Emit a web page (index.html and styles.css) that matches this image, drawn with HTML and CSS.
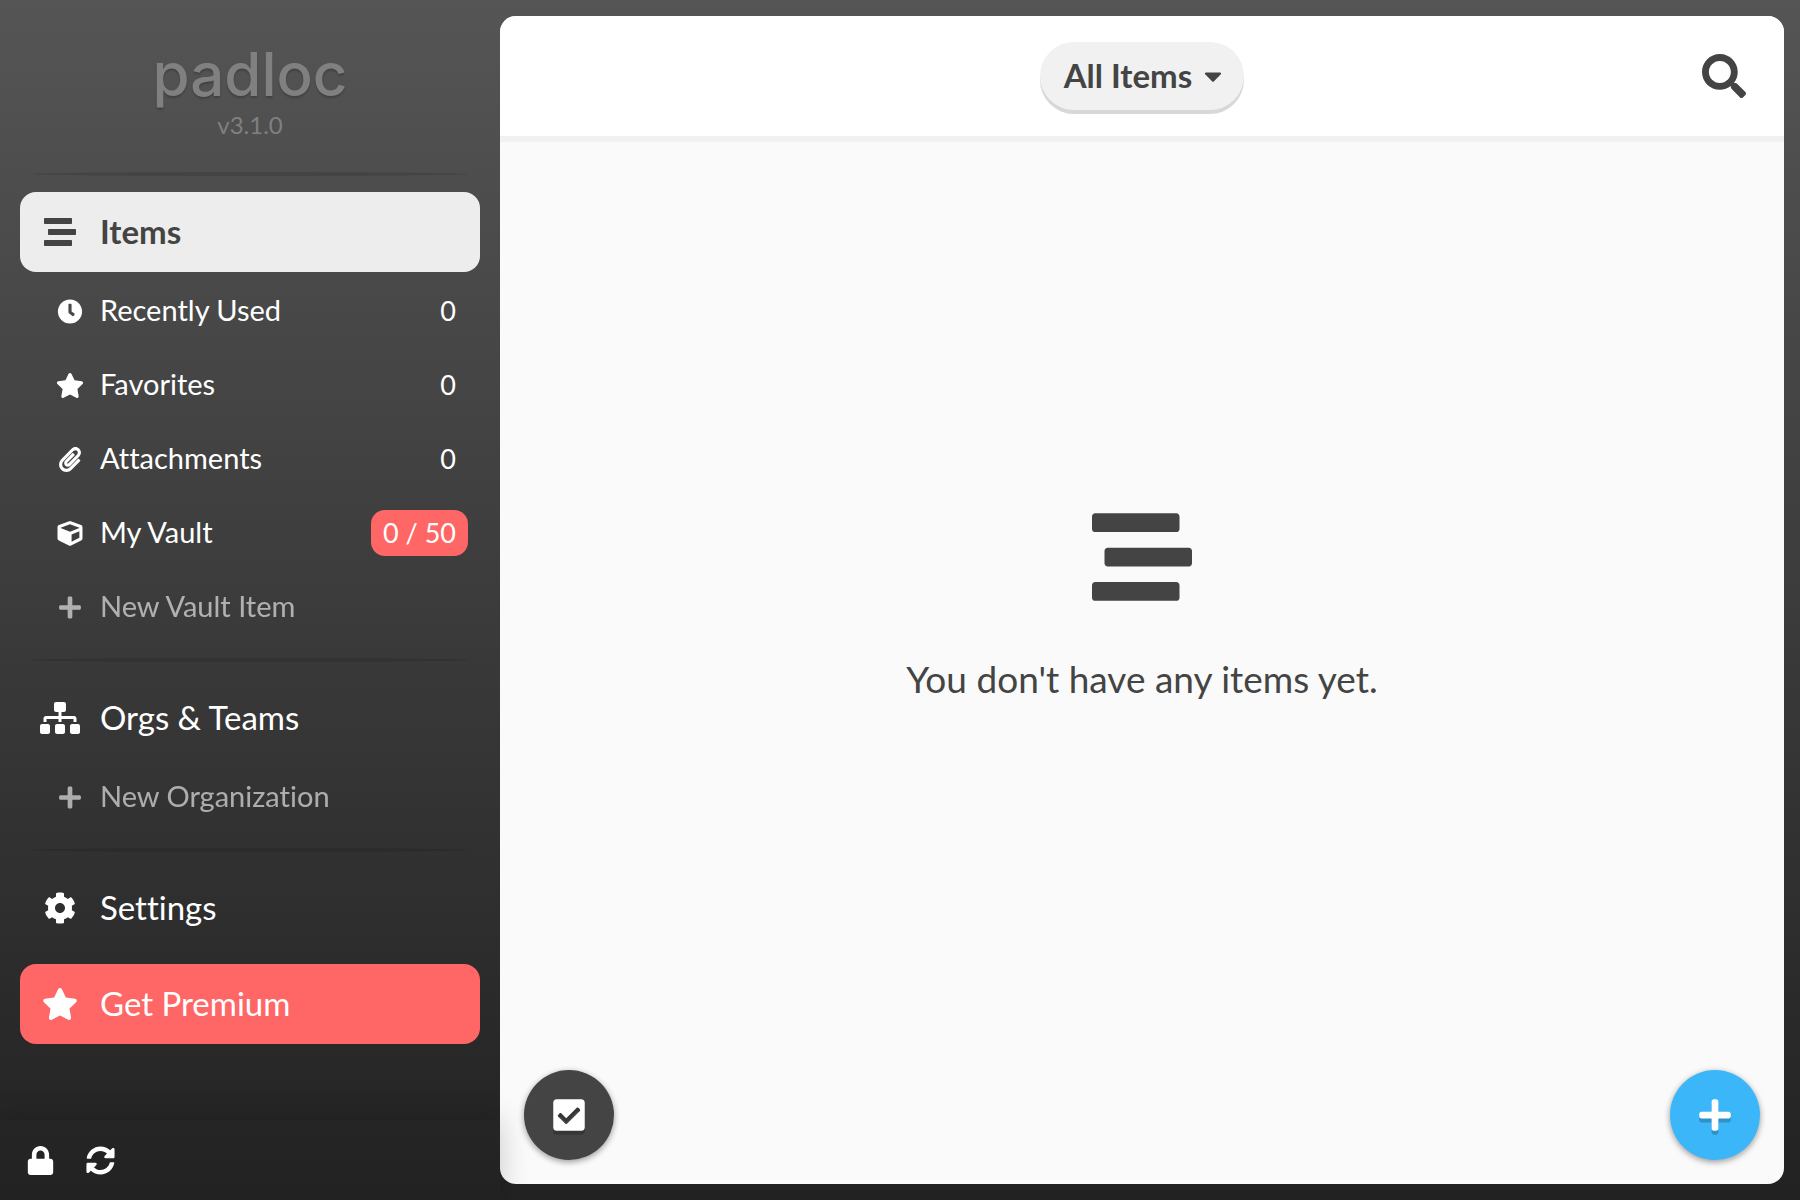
FILE: index.html
```html
<!DOCTYPE html>
<html lang="en">
<head>
<meta charset="utf-8">
<meta name="viewport" content="width=device-width, initial-scale=1">
<title>Padloc</title>
<link rel="stylesheet" href="styles.css">
</head>
<body>
<svg class="sprite" aria-hidden="true">
  <symbol id="stream" viewBox="0 0 512 512"><path d="M16 128h416c8.84 0 16-7.16 16-16V48c0-8.84-7.16-16-16-16H16C7.16 32 0 39.16 0 48v64c0 8.84 7.16 16 16 16zm480 80H80c-8.84 0-16 7.16-16 16v64c0 8.84 7.16 16 16 16h416c8.84 0 16-7.16 16-16v-64c0-8.84-7.16-16-16-16zm-64 176H16c-8.84 0-16 7.16-16 16v64c0 8.84 7.16 16 16 16h416c8.84 0 16-7.16 16-16v-64c0-8.84-7.16-16-16-16z"/></symbol>
  <symbol id="clock" viewBox="0 0 512 512"><path d="M256 8C119 8 8 119 8 256s111 248 248 248 248-111 248-248S393 8 256 8zm92.49 313l-20 25a16 16 0 0 1-22.49 2.5l-67-49.72a40 40 0 0 1-15-31.23V112a16 16 0 0 1 16-16h32a16 16 0 0 1 16 16v144l58 42.5a16 16 0 0 1 2.49 22.5z"/></symbol>
  <symbol id="star" viewBox="0 0 576 512"><path d="M259.3 17.8L194 150.2 47.9 171.5c-26.2 3.8-36.7 36.1-17.7 54.6l105.7 103-25 145.5c-4.5 26.3 23.2 46 46.4 33.7L288 439.6l130.7 68.7c23.2 12.2 50.9-7.4 46.4-33.7l-25-145.5 105.7-103c19-18.5 8.5-50.8-17.7-54.6L382 150.2 316.7 17.8c-11.7-23.6-45.6-23.9-57.4 0z"/></symbol>
  <symbol id="paperclip" viewBox="0 0 448 512"><path d="M43.246 466.142c-58.43-60.289-57.341-157.511 1.386-217.581L254.392 34c44.316-45.332 116.351-45.336 160.671 0 43.89 44.894 43.943 117.329 0 162.276L232.214 383.128c-29.855 30.537-78.633 30.111-107.982-.998-28.275-29.97-27.368-77.473 1.452-106.953l143.743-146.835c6.182-6.314 16.312-6.422 22.626-.241l22.861 22.379c6.315 6.182 6.422 16.312.241 22.626L171.427 319.927c-4.932 5.045-5.236 13.428-.648 18.292 4.372 4.634 11.245 4.711 15.688.165l182.849-186.851c19.613-20.062 19.613-52.725-.011-72.798-19.189-19.627-49.957-19.637-69.154 0L90.39 293.295c-34.763 35.56-35.299 93.12-1.191 128.313 34.01 35.093 88.985 35.137 123.058.286l172.06-175.999c6.177-6.319 16.307-6.433 22.626-.256l22.877 22.364c6.319 6.177 6.434 16.307.256 22.626l-172.06 175.998c-59.576 60.938-155.943 60.216-214.77-.485z"/></symbol>
  <symbol id="cube" viewBox="0 0 512 512"><path d="M239.1 6.3l-208 78c-18.7 7-31.1 25-31.1 45v225.1c0 18.2 10.3 34.8 26.5 42.9l208 104c13.5 6.8 29.4 6.8 42.9 0l208-104c16.3-8.1 26.5-24.8 26.5-42.9V129.3c0-20-12.4-37.9-31.1-44.9l-208-78C262 2.2 250 2.2 239.1 6.3zM256 68.4l192 72v1.1l-192 78-192-78v-1.1l192-72zm32 356V275.5l160-65v133.9l-160 80z"/></symbol>
  <symbol id="plus" viewBox="0 0 448 512"><path d="M416 208H272V64c0-17.67-14.33-32-32-32h-32c-17.67 0-32 14.33-32 32v144H32c-17.67 0-32 14.33-32 32v32c0 17.67 14.33 32 32 32h144v144c0 17.67 14.33 32 32 32h32c17.67 0 32-14.33 32-32V304h144c17.67 0 32-14.33 32-32v-32c0-17.67-14.33-32-32-32z"/></symbol>
  <symbol id="sitemap" viewBox="0 0 640 512"><path d="M128 352H32c-17.67 0-32 14.33-32 32v96c0 17.67 14.33 32 32 32h96c17.67 0 32-14.33 32-32v-96c0-17.67-14.33-32-32-32zm-24-80h192v48h48v-48h192v48h48v-57.59c0-21.17-17.23-38.41-38.41-38.41H344v-64h40c17.67 0 32-14.33 32-32V32c0-17.67-14.33-32-32-32H256c-17.67 0-32 14.33-32 32v96c0 17.67 14.33 32 32 32h40v64H94.41C73.23 224 56 241.23 56 262.41V320h48v-48zm264 80h-96c-17.67 0-32 14.33-32 32v96c0 17.67 14.33 32 32 32h96c17.67 0 32-14.33 32-32v-96c0-17.67-14.33-32-32-32zm240 0h-96c-17.67 0-32 14.33-32 32v96c0 17.67 14.33 32 32 32h96c17.67 0 32-14.33 32-32v-96c0-17.67-14.33-32-32-32z"/></symbol>
  <symbol id="cog" viewBox="0 0 512 512"><path d="M487.4 315.7l-42.6-24.6c4.3-23.2 4.3-47 0-70.2l42.6-24.6c4.9-2.8 7.1-8.6 5.5-14-11.1-35.6-30-67.8-54.7-94.6-3.8-4.1-10-5.1-14.8-2.3L380.8 110c-17.9-15.4-38.5-27.3-60.8-35.1V25.800c0-5.600-3.900-10.500-9.400-11.700-36.700-8.200-74.300-7.800-109.200 0-5.500 1.200-9.400 6.100-9.400 11.700V75c-22.200 7.900-42.800 19.800-60.800 35.100L88.700 85.500c-4.900-2.800-11-1.900-14.800 2.300-24.700 26.700-43.600 58.900-54.700 94.600-1.700 5.400.6 11.200 5.500 14L67.300 221c-4.300 23.200-4.300 47 0 70.200l-42.6 24.600c-4.900 2.800-7.100 8.600-5.500 14 11.100 35.600 30 67.800 54.700 94.600 3.800 4.100 10 5.100 14.800 2.300l42.600-24.600c17.900 15.400 38.500 27.300 60.800 35.100v49.200c0 5.600 3.900 10.500 9.400 11.700 36.700 8.200 74.300 7.800 109.200 0 5.500-1.200 9.400-6.100 9.400-11.700v-49.200c22.200-7.900 42.800-19.800 60.800-35.100l42.600 24.600c4.900 2.800 11 1.900 14.800-2.300 24.700-26.700 43.600-58.900 54.700-94.600 1.500-5.500-.7-11.300-5.600-14.100zM256 336c-44.100 0-80-35.900-80-80s35.900-80 80-80 80 35.900 80 80-35.900 80-80 80z"/></symbol>
  <symbol id="lock" viewBox="0 0 448 512"><path d="M400 224h-24v-72C376 68.200 307.800 0 224 0S72 68.200 72 152v72H48c-26.500 0-48 21.500-48 48v192c0 26.500 21.500 48 48 48h352c26.500 0 48-21.500 48-48V272c0-26.500-21.500-48-48-48zm-104 0H152v-72c0-39.700 32.300-72 72-72s72 32.300 72 72v72z"/></symbol>
  <symbol id="sync" viewBox="0 0 512 512"><path d="M370.720 133.280C339.458 104.008 298.888 87.962 255.848 88c-77.458.068-144.328 53.178-162.791 126.850-1.344 5.363-6.122 9.150-11.651 9.150H24.103c-7.498 0-13.194-6.807-11.807-14.176C33.933 94.924 134.813 8 256 8c66.448 0 126.791 26.136 171.315 68.685L463.030 40.970C478.149 25.851 504 36.559 504 57.941V192c0 13.255-10.745 24-24 24H345.941c-21.382 0-32.090-25.851-16.971-40.971l41.750-41.749zM32 296h134.059c21.382 0 32.090 25.851 16.971 40.971l-41.750 41.750c31.262 29.273 71.835 45.319 114.876 45.280 77.418-.07 144.315-53.144 162.787-126.849 1.344-5.363 6.122-9.150 11.651-9.150h57.304c7.498 0 13.194 6.807 11.807 14.176C478.067 417.076 377.187 504 256 504c-66.448 0-126.791-26.136-171.315-68.685L48.970 471.030C33.851 486.149 8 475.441 8 454.059V320c0-13.255 10.745-24 24-24z"/></symbol>
  <symbol id="search" viewBox="0 0 512 512"><path d="M505 442.700L405.300 343c-4.500-4.500-10.600-7-17-7H372c27.600-35.300 44-79.700 44-128C416 93.100 322.900 0 208 0S0 93.100 0 208s93.100 208 208 208c48.300 0 92.700-16.400 128-44v16.300c0 6.400 2.500 12.500 7 17l99.700 99.700c9.400 9.400 24.600 9.400 33.900 0l28.300-28.300c9.400-9.400 9.400-24.600.1-34zM208 336c-70.700 0-128-57.200-128-128 0-70.700 57.200-128 128-128 70.700 0 128 57.200 128 128 0 70.700-57.200 128-128 128z"/></symbol>
  <symbol id="caret" viewBox="0 0 320 512"><path d="M31.300 192h257.300c17.800 0 26.700 21.500 14.100 34.100L174.100 354.800c-7.800 7.800-20.500 7.800-28.300 0L17.200 226.100C4.600 213.500 13.500 192 31.300 192z"/></symbol>
  <symbol id="check" viewBox="0 0 448 512"><path d="M400 480H48c-26.510 0-48-21.490-48-48V80c0-26.510 21.490-48 48-48h352c26.510 0 48 21.490 48 48v352c0 26.510-21.490 48-48 48zm-204.686-98.059l184-184c6.248-6.248 6.248-16.379 0-22.627l-22.627-22.627c-6.248-6.248-16.379-6.249-22.628 0L184 302.745l-70.059-70.059c-6.248-6.248-16.379-6.248-22.628 0l-22.627 22.627c-6.248 6.248-6.248 16.379 0 22.627l104 104c6.249 6.249 16.379 6.249 22.628.001z"/></symbol>
</svg>

<div class="app">
  <aside class="sidebar">
    <div class="scroller">
      <div class="brand">
        <div class="logo">padloc</div>
        <div class="version">v3.1.0</div>
      </div>
      <nav class="menu">
        <hr class="separator">
        <a class="item selected" href="#items"><svg class="icon"><use href="#stream"/></svg><span class="label">Items</span></a>
        <div class="sub-menu">
          <a class="item sub" href="#recent"><svg class="icon"><use href="#clock"/></svg><span class="label">Recently Used</span><span class="count">0</span></a>
          <a class="item sub" href="#favorites"><svg class="icon"><use href="#star"/></svg><span class="label">Favorites</span><span class="count">0</span></a>
          <a class="item sub" href="#attachments"><svg class="icon"><use href="#paperclip"/></svg><span class="label">Attachments</span><span class="count">0</span></a>
          <a class="item sub" href="#vault"><svg class="icon"><use href="#cube"/></svg><span class="label">My Vault</span><span class="count warning">0 / 50</span></a>
          <button class="item sub faded" type="button"><svg class="icon"><use href="#plus"/></svg><span class="label">New Vault Item</span></button>
        </div>
        <hr class="separator">
        <a class="item" href="#orgs"><svg class="icon"><use href="#sitemap"/></svg><span class="label">Orgs &amp; Teams</span></a>
        <div class="sub-menu">
          <button class="item sub faded" type="button"><svg class="icon"><use href="#plus"/></svg><span class="label">New Organization</span></button>
        </div>
        <hr class="separator">
        <a class="item" href="#settings"><svg class="icon"><use href="#cog"/></svg><span class="label">Settings</span></a>
        <button class="item premium" type="button"><svg class="icon"><use href="#star"/></svg><span class="label">Get Premium</span></button>
      </nav>
    </div>
    <footer class="footer">
      <button class="tool" type="button" aria-label="Lock"><svg class="icon"><use href="#lock"/></svg></button>
      <button class="tool" type="button" aria-label="Synchronize"><svg class="icon"><use href="#sync"/></svg></button>
    </footer>
  </aside>

  <main class="panel">
    <header class="header">
      <button class="filter" type="button"><span class="label">All Items</span><svg class="caret"><use href="#caret"/></svg></button>
      <button class="search" type="button" aria-label="Search"><svg class="icon"><use href="#search"/></svg></button>
    </header>
    <section class="empty">
      <svg class="icon"><use href="#stream"/></svg>
      <p class="message">You don't have any items yet.</p>
    </section>
    <button class="fab select" type="button" aria-label="Select items"><svg class="icon"><use href="#check"/></svg></button>
    <button class="fab add" type="button" aria-label="Add item"><svg class="icon"><use href="#plus"/></svg></button>
  </main>
</div>
</body>
</html>
```
FILE: styles.css
```css
:root {
  --dark: #444;
  --light: #fafafa;
  --red: #f66;
  --blue: #3bb7f9;
}

* { box-sizing: border-box; }

body {
  margin: 0;
  font-family: Lato, "Noto Sans", sans-serif;
  font-variant-ligatures: none;
  color: var(--dark);
  background: #222;
}

a { color: inherit; text-decoration: none; }

button {
  margin: 0;
  padding: 0;
  border: 0;
  background: none;
  color: inherit;
  font: inherit;
  text-align: left;
  cursor: pointer;
}

.sprite { display: none; }

svg { display: block; fill: currentColor; }

.app {
  display: grid;
  grid-template-columns: 500px 1fr;
  min-height: 100vh;
  background: linear-gradient(#555, #222);
}

.sidebar {
  display: flex;
  flex-direction: column;
  color: #fff;
}

.scroller { flex: 1; }

.brand {
  height: 158px;
  padding-top: 40px;
  text-align: center;
  color: #808080;
}

.logo {
  font-family: Inter, Lato, sans-serif;
  font-size: 60px;
  font-weight: 500;
  line-height: 68px;
  text-shadow: 0 2px 2px rgba(0, 0, 0, 0.2);
}

.version {
  font-size: 24px;
  line-height: 34px;
}

.menu { padding: 0 20px; }

.separator {
  height: 4px;
  margin: 14px 12px 16px;
  border: 0;
  border-radius: 50%;
  background: rgba(0, 0, 0, 0.12);
}

.item {
  display: flex;
  align-items: center;
  gap: 20px;
  width: 100%;
  height: 80px;
  padding: 0 12px 0 20px;
  border-radius: 16px;
  font-size: 33px;
  line-height: 40px;
}

.item .icon { flex: none; width: 40px; height: 32px; }

.label { padding-bottom: 2px; }

.item .label { flex: 1; }

.selected {
  background: #ededed;
  color: var(--dark);
  font-weight: 700;
}

.sub-menu { margin-top: 2px; }

.sub {
  gap: 15px;
  height: 74px;
  padding-left: 35px;
  font-size: 29px;
}

.sub .icon { width: 30px; height: 25px; }

.faded .icon, .faded .label { opacity: 0.6; }

.count {
  padding: 0 12px;
  border-radius: 14px;
  font-size: 27px;
  line-height: 46px;
}

.warning { background: var(--red); }

.premium {
  margin-top: 16px;
  background: var(--red);
}

.footer {
  position: relative;
  z-index: 1;
  display: flex;
  height: 80px;
  padding: 0 10px;
  box-shadow: 0 0 30px rgba(0, 0, 0, 0.2);
}

.tool {
  display: grid;
  place-items: center;
  width: 60px;
}

.tool .icon { width: 29px; height: 29px; }

.panel {
  position: relative;
  display: flex;
  flex-direction: column;
  margin: 16px 16px 16px 0;
  border-radius: 16px;
  background: var(--light);
  overflow: hidden;
}

.header {
  display: grid;
  grid-template-columns: 1fr auto 1fr;
  align-items: center;
  height: 126px;
  padding: 0 38px;
  border-bottom: 6px solid #f1f1f1;
  background: #fff;
}

.filter {
  grid-column: 2;
  display: flex;
  align-items: center;
  gap: 12px;
  height: 68px;
  padding: 0 22px 0 24px;
  border-radius: 36px;
  background: #f1f1f1;
  box-shadow: 0 4px 0 #d8d8d8;
  font-size: 33px;
  font-weight: 700;
}

.caret { width: 18px; height: 28px; }

.search { justify-self: end; }

.search .icon { width: 44px; height: 44px; }

.empty {
  flex: 1;
  display: flex;
  flex-direction: column;
  align-items: center;
  justify-content: center;
  gap: 48px;
  padding-bottom: 116px;
}

.empty .icon { width: 100px; height: 100px; }

.message {
  margin: 0;
  font-size: 37px;
  line-height: 48px;
}

.fab {
  position: absolute;
  bottom: 24px;
  display: grid;
  place-items: center;
  width: 90px;
  height: 90px;
  border-radius: 50%;
  color: #fff;
  box-shadow: 0 2px 6px rgba(0, 0, 0, 0.4);
}

.fab .icon {
  width: 36px;
  height: 36px;
  filter: drop-shadow(0 4px 0 rgba(0, 0, 0, 0.2));
}

.select { left: 24px; background: var(--dark); }

.add { right: 24px; background: var(--blue); }
```
